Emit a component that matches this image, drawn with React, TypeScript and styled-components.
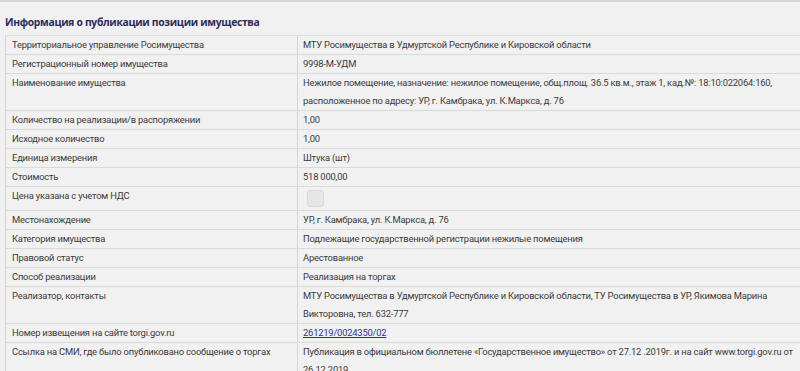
import styled, { createGlobalStyle } from "styled-components";

const GlobalStyle = createGlobalStyle`
  html, body {
    margin: 0;
    padding: 0;
    background: #f1f1f1;
    overflow: hidden;
  }
  body {
    font-family: Roboto, "Open Sans", sans-serif;
    color: #333;
  }
`;

type Row = {
  label: string;
  value?: string;
  link?: string;
  checkbox?: boolean;
};

const rows: Row[] = [
  { label: "Территориальное управление Росимущества", value: "МТУ Росимущества в Удмуртской Республике и Кировской области" },
  { label: "Регистрационный номер имущества", value: "9998-М-УДМ" },
  {
    label: "Наименование имущества",
    value:
      "Нежилое помещение, назначение: нежилое помещение, общ.площ. 36.5 кв.м., этаж 1, кад.№: 18:10:022064:160, расположенное по адресу: УР, г. Камбрака, ул. К.Маркса, д. 76",
  },
  { label: "Количество на реализации/в распоряжении", value: "1,00" },
  { label: "Исходное количество", value: "1,00" },
  { label: "Единица измерения", value: "Штука (шт)" },
  { label: "Стоимость", value: "518 000,00" },
  { label: "Цена указана с учетом НДС", checkbox: true },
  { label: "Местонахождение", value: "УР, г. Камбрака, ул. К.Маркса, д. 76" },
  { label: "Категория имущества", value: "Подлежащие государственной регистрации нежилые помещения" },
  { label: "Правовой статус", value: "Арестованное" },
  { label: "Способ реализации", value: "Реализация на торгах" },
  {
    label: "Реализатор, контакты",
    value:
      "МТУ Росимущества в Удмуртской Республике и Кировской области, ТУ Росимущества в УР, Якимова Марина Викторовна, тел. 632-777",
  },
  { label: "Номер извещения на сайте torgi.gov.ru", link: "261219/0024350/02" },
  {
    label: "Ссылка на СМИ, где было опубликовано сообщение о торгах",
    value:
      "Публикация в официальном бюллетене «Государственное имущество» от 27.12 .2019г. и на сайт www.torgi.gov.ru от 26.12.2019",
  },
];

function App() {
  return (
    <>
      <GlobalStyle />
      <Page>
        <Title>Информация о публикации позиции имущества</Title>
        <Table>
          <colgroup>
            <col style={{ width: 292 }} />
            <col />
          </colgroup>
          <tbody>
            {rows.map((row) => (
              <tr key={row.label}>
                <LabelCell>{row.label}</LabelCell>
                <ValueCell $tall={row.checkbox}>
                  {row.checkbox ? (
                    <Check />
                  ) : row.link ? (
                    <Link href="#">{row.link}</Link>
                  ) : (
                    row.value
                  )}
                </ValueCell>
              </tr>
            ))}
          </tbody>
        </Table>
      </Page>
    </>
  );
}

export default App;

const Page = styled.div`
  box-sizing: border-box;
  border-top: 2px solid #d4d4d4;
  padding: 14px 0 0 5px;
  width: 800px;
`;

const Title = styled.h1`
  margin: 0;
  padding: 0 0 6px 0;
  font-family: "Open Sans", sans-serif;
  font-size: 10.3px;
  font-weight: 700;
  letter-spacing: -0.3px;
  color: #2b2b5a;
  line-height: 13px;
  border-bottom: 1px solid #dcdcdc;
`;

const Table = styled.table`
  border-collapse: collapse;
  table-layout: fixed;
  width: 100%;
  font-size: 9.4px;
  letter-spacing: -0.2px;
  border-left: 1px solid #d6d6d6;
`;

const LabelCell = styled.td`
  padding: 0 6px;
  vertical-align: top;
  line-height: 18px;
  border-bottom: 1px solid #dadada;
  border-right: 1px solid #d6d6d6;
  color: #3a3a3a;
  white-space: nowrap;
`;

const ValueCell = styled.td<{ $tall?: boolean }>`
  padding: ${(p) => (p.$tall ? "2px 0 3px 9px" : "0 0 0 5px")};
  vertical-align: top;
  line-height: 18px;
  border-bottom: 1px solid #dadada;
  color: #3a3a3a;
`;

const Check = styled.span`
  display: block;
  width: 15px;
  height: 15px;
  margin: 1px 0 0 0;
  border: 1px solid #d8d8d8;
  border-radius: 3px;
  background: #e6e6e6;
`;

const Link = styled.a`
  color: #2e3192;
  text-decoration: underline;
`;
